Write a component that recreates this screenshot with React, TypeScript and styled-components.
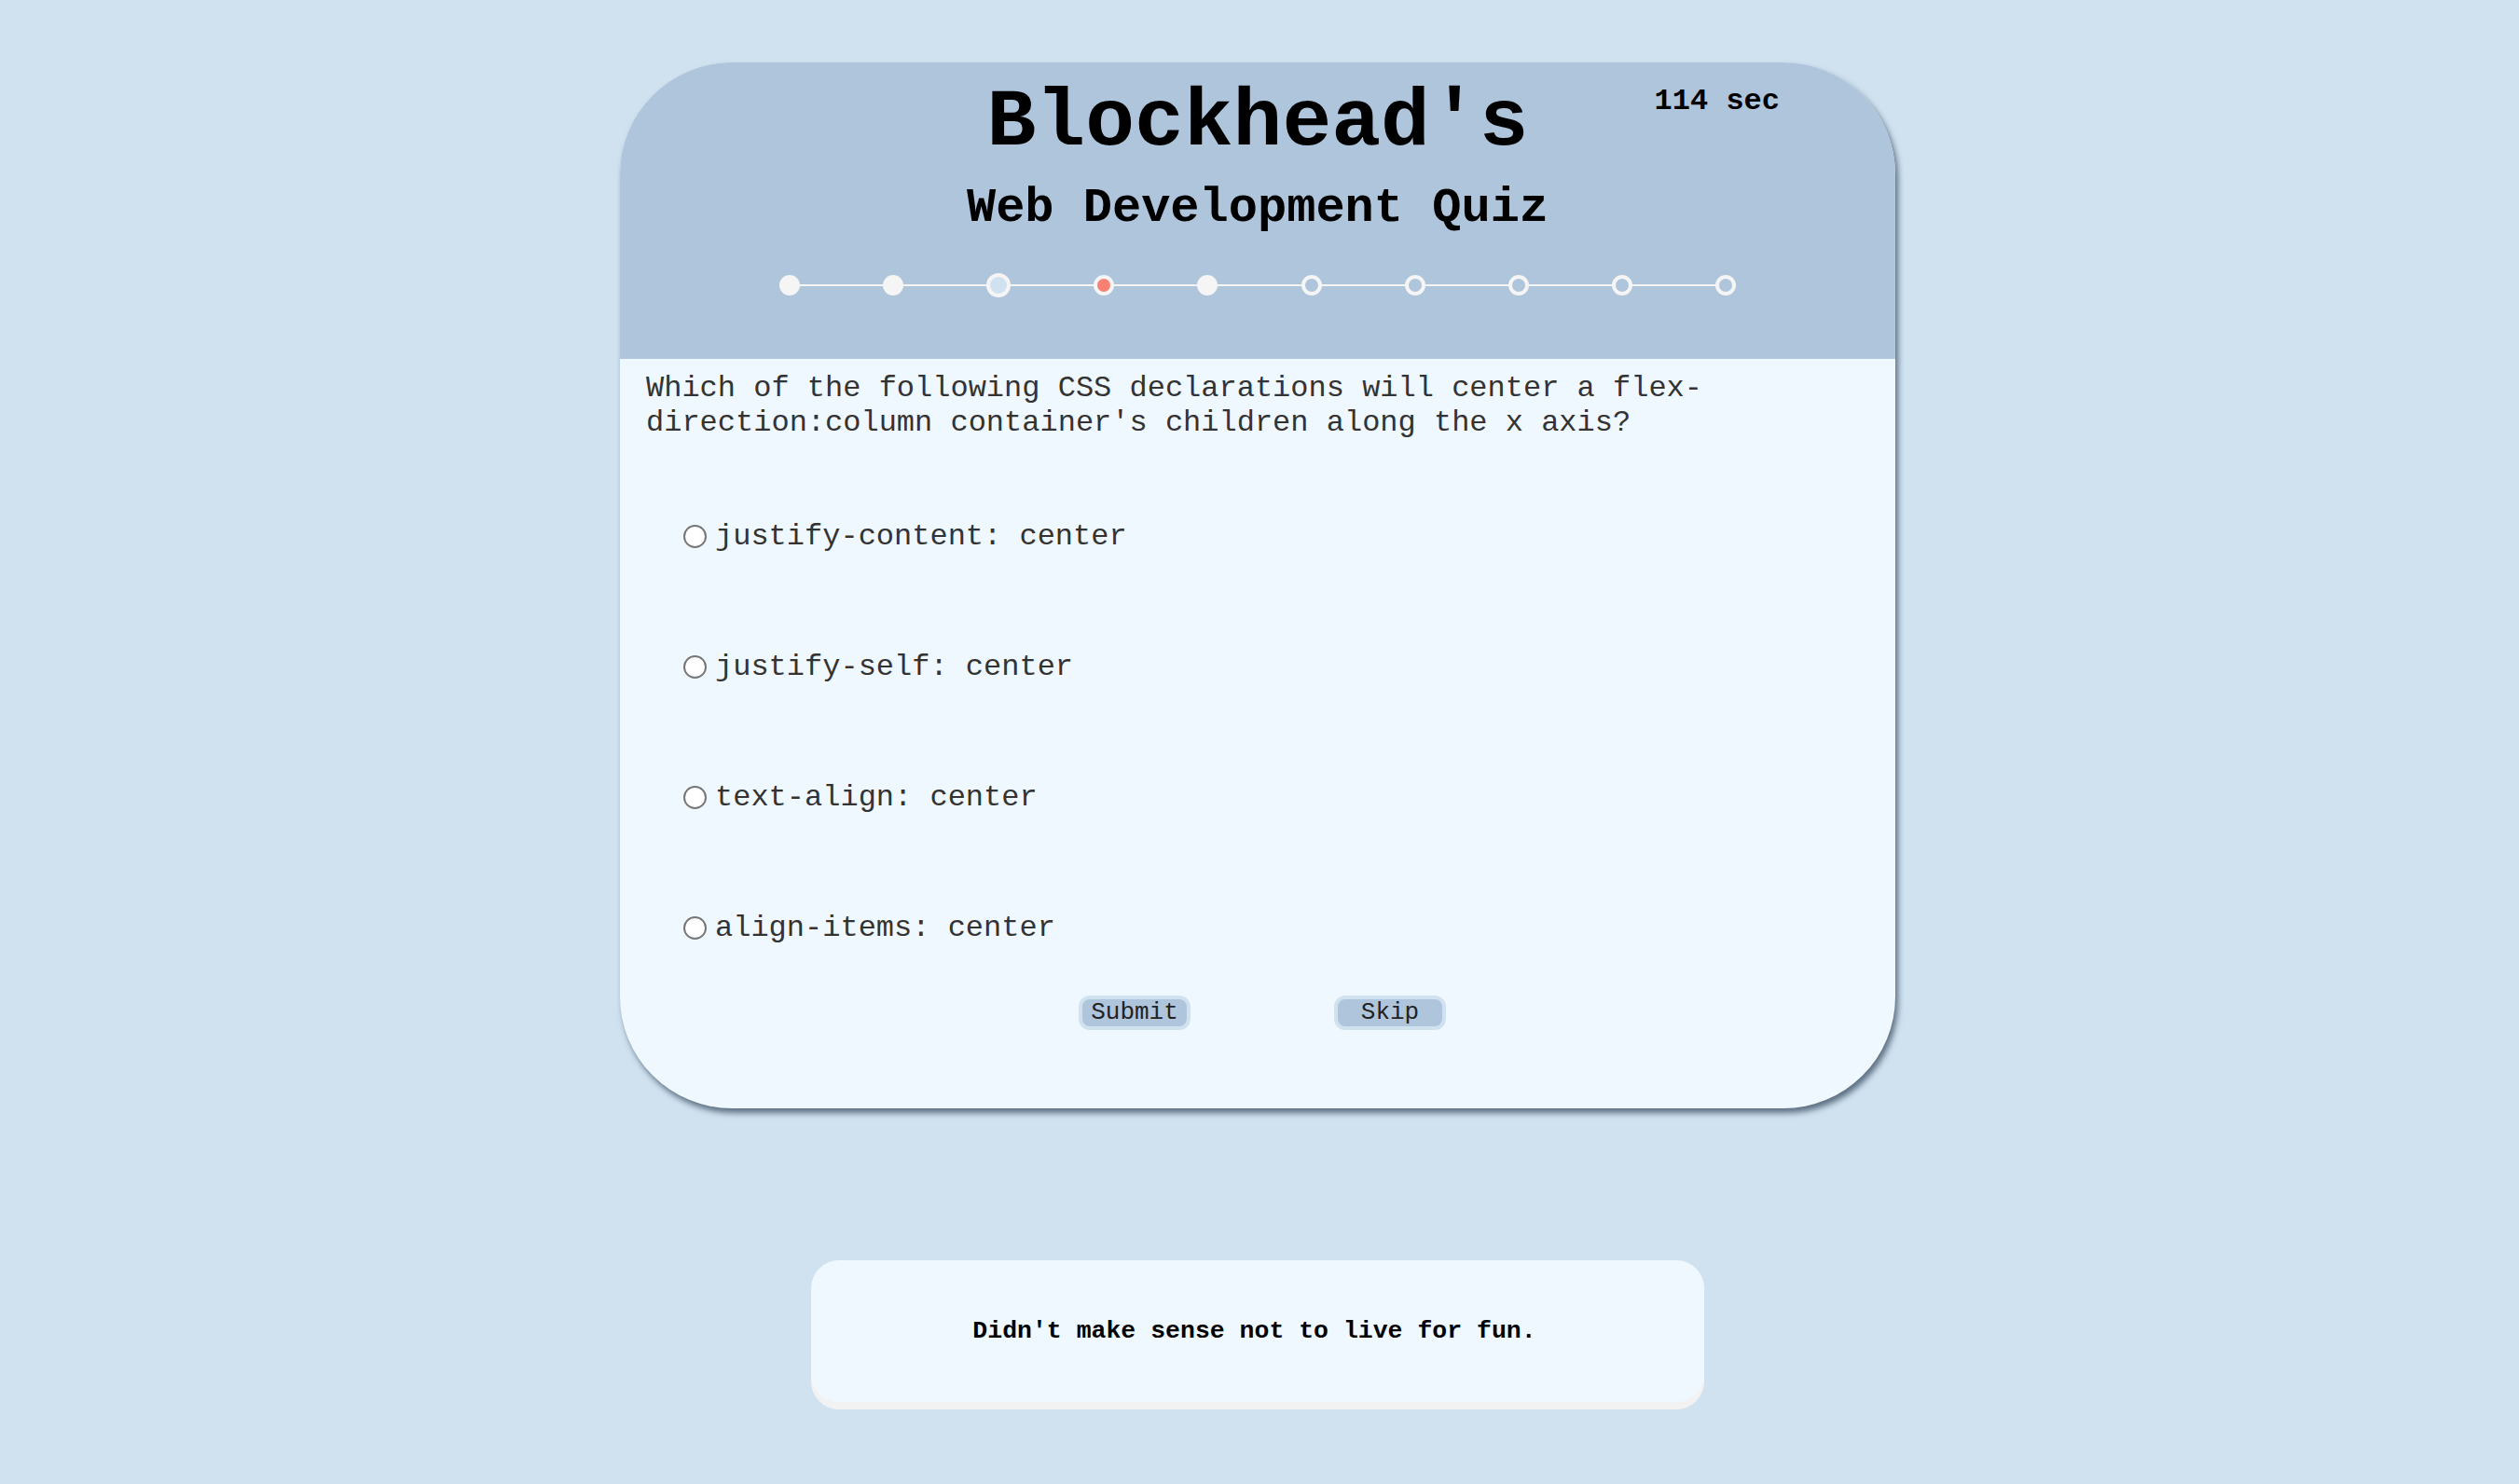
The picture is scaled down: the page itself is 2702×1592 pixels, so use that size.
import React from "react";
import styled, { createGlobalStyle } from "styled-components";

const GlobalStyle = createGlobalStyle`
  html, body {
    margin: 0;
    padding: 0;
    background: #d0e2f0;
    font-family: "Liberation Mono", "Courier New", monospace;
  }
  * { box-sizing: border-box; }
`;

const Page = styled.div`
  display: flex;
  flex-direction: column;
  align-items: center;
  padding-top: 67px;
  padding-right: 4px;
  min-height: 1592px;
  overflow: hidden;
`;

const Card = styled.section`
  width: 1368px;
  border-radius: 120px;
  overflow: hidden;
  background: #f0f8ff;
  box-shadow: 3px 5px 6px rgba(55, 75, 95, 0.75);
`;

const Header = styled.header`
  position: relative;
  background: #afc5dc;
  padding: 12px 0 66px;
  display: flex;
  flex-direction: column;
  align-items: center;
`;

const Title = styled.h1`
  margin: 0;
  font-size: 88px;
  line-height: 105.6px;
  font-weight: bold;
  color: #000;
`;

const Subtitle = styled.h2`
  margin: 8px 0 0;
  font-size: 52px;
  line-height: 62.4px;
  font-weight: bold;
  color: #000;
`;

const Timer = styled.div`
  position: absolute;
  top: 23px;
  right: 124px;
  font-size: 32px;
  line-height: 38.4px;
  font-weight: bold;
  color: #000;
`;

const Progress = styled.div`
  width: 1026px;
  height: 26px;
  margin-top: 38px;
  display: flex;
  align-items: center;
`;

type DotKind = "done" | "visited" | "current" | "todo";

const Dot = styled.span<{ $kind: DotKind }>`
  flex: none;
  width: ${(p) => (p.$kind === "visited" ? 26 : 22)}px;
  height: ${(p) => (p.$kind === "visited" ? 26 : 22)}px;
  border-radius: 50%;
  border: ${(p) => (p.$kind === "done" ? "0" : "4px solid #f5f5f5")};
  background: ${(p) =>
    p.$kind === "done"
      ? "#f5f5f5"
      : p.$kind === "visited"
      ? "#d0e2f0"
      : p.$kind === "current"
      ? "#fa8072"
      : "#afc5dc"};
`;

const Connector = styled.span`
  flex: 1;
  height: 2px;
  background: #f5f5f5;
`;

const Body = styled.div`
  padding: 13px 28px 84px;
  display: flex;
  flex-direction: column;
`;

const Question = styled.p`
  margin: 0;
  font-size: 32px;
  line-height: 37px;
  color: #333;
`;

const Options = styled.div`
  margin-top: 85px;
  display: flex;
  flex-direction: column;
  gap: 103px;
`;

const Option = styled.label`
  display: flex;
  align-items: center;
  gap: 9px;
  padding-left: 40px;
  height: 37px;
  font-size: 32px;
  line-height: 37px;
  color: #333;
`;

const Radio = styled.input`
  appearance: none;
  -webkit-appearance: none;
  margin: 0;
  width: 25px;
  height: 25px;
  border-radius: 50%;
  border: 2px solid #767676;
  background: #fff;
  flex: none;
`;

const ButtonRow = styled.div`
  margin-top: 54px;
  display: flex;
  justify-content: center;
  gap: 154px;
  padding-left: 10px;
`;

const Button = styled.button`
  width: 120px;
  height: 37px;
  border: 4px solid #d0e2f0;
  border-radius: 12px;
  background: #afc5dc;
  color: #222;
  font-family: "Liberation Mono", "Courier New", monospace;
  font-size: 26px;
  line-height: 29px;
  padding: 0;
  cursor: pointer;
`;

const Footer = styled.div`
  margin-top: 163px;
  width: 958px;
  height: 152px;
  padding-right: 7px;
  border-radius: 30px;
  background: #f0f8ff;
  box-shadow: 0 8px 0 #f2f2f2;
  display: flex;
  align-items: center;
  justify-content: center;
`;

const Quote = styled.p`
  margin: 0;
  font-size: 26.5px;
  font-weight: bold;
  color: #000;
`;

const BelowFold = styled.div`
  align-self: stretch;
  margin-top: 88px;
  padding-left: 76px;
  display: flex;
`;

const GrayBlock = styled.div`
  width: 689px;
  height: 40px;
  background: #c6cacd;
`;

const LightBlock = styled.div`
  margin-left: 688px;
  width: 98px;
  height: 40px;
  background: #eef4f8;
`;

const dots: DotKind[] = [
  "done",
  "done",
  "visited",
  "current",
  "done",
  "todo",
  "todo",
  "todo",
  "todo",
  "todo",
];

const options = [
  "justify-content: center",
  "justify-self: center",
  "text-align: center",
  "align-items: center",
];

export default function App() {
  return (
    <>
      <GlobalStyle />
      <Page>
        <Card>
          <Header>
            <Title>Blockhead's</Title>
            <Subtitle>Web Development Quiz</Subtitle>
            <Timer>114 sec</Timer>
            <Progress>
              {dots.map((k, i) => (
                <React.Fragment key={i}>
                  {i > 0 && <Connector />}
                  <Dot $kind={k} />
                </React.Fragment>
              ))}
            </Progress>
          </Header>
          <Body>
            <Question>
              Which of the following CSS declarations will center a
              flex-direction:column container's children along the x axis?
            </Question>
            <Options>
              {options.map((o) => (
                <Option key={o}>
                  <Radio type="radio" name="answer" />
                  {o}
                </Option>
              ))}
            </Options>
            <ButtonRow>
              <Button>Submit</Button>
              <Button>Skip</Button>
            </ButtonRow>
          </Body>
        </Card>
        <Footer>
          <Quote>Didn't make sense not to live for fun.</Quote>
        </Footer>
        <BelowFold>
          <GrayBlock />
          <LightBlock />
        </BelowFold>
      </Page>
    </>
  );
}
